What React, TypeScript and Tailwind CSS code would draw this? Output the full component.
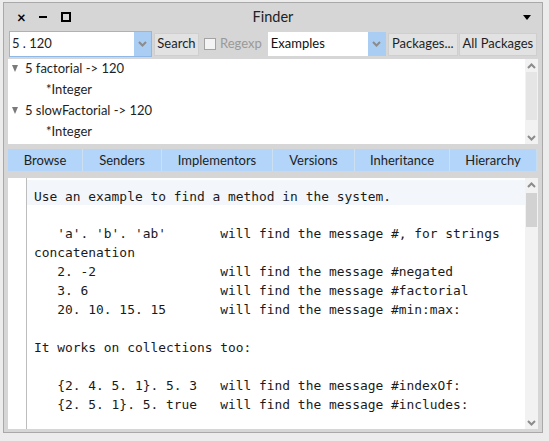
import React from "react";

const UI = "font-['Lato','Noto_Sans',sans-serif]";
const MONO = "font-['DejaVu_Sans_Mono','Liberation_Mono',monospace]";

const TREE = [
  { label: "5 factorial -> 120", child: "*Integer" },
  { label: "5 slowFactorial -> 120", child: "*Integer" },
];

const ACTIONS = [
  { label: "Browse", w: "w-[74px]" },
  { label: "Senders", w: "w-[79px]" },
  { label: "Implementors", w: "w-[111px]" },
  { label: "Versions", w: "w-[82px]" },
  { label: "Inheritance", w: "w-[95px]" },
  { label: "Hierarchy", w: "w-[87px]" },
];

const LINES = [
  "",
  "   'a'. 'b'. 'ab'       will find the message #, for strings",
  "concatenation",
  "   2. -2                will find the message #negated",
  "   3. 6                 will find the message #factorial",
  "   20. 10. 15. 15       will find the message #min:max:",
  "",
  "It works on collections too:",
  "",
  "   {2. 4. 5. 1}. 5. 3   will find the message #indexOf:",
  "   {2. 5. 1}. 5. true   will find the message #includes:",
];

function Chevron({ up = false, color = "#8c8c8c" }: { up?: boolean; color?: string }) {
  return (
    <svg width="9" height="6" viewBox="0 0 9 6">
      <polyline
        points={up ? "1,5 4.5,1.5 8,5" : "1,1 4.5,4.5 8,1"}
        fill="none"
        stroke={color}
        strokeWidth="2"
      />
    </svg>
  );
}

function ScrollBar({ thumbTop, thumbH, thumb }: { thumbTop: string; thumbH: string; thumb: string }) {
  return (
    <div className="w-[13px] shrink-0 bg-[#f2f2f2] flex flex-col">
      <div className="h-[13px] flex items-center justify-center">
        <Chevron up />
      </div>
      <div className={`${thumbTop} ${thumbH} ${thumb} mx-[1px]`} />
      <div className="flex-1" />
      <div className="h-[13px] flex items-center justify-center">
        <Chevron />
      </div>
    </div>
  );
}

export default function App() {
  return (
    <div className={`w-[549px] h-[441px] bg-[#ececec] pt-[2px] pl-[3px] ${UI} text-[#1e1e1e]`}>
      <div className="w-[540px] h-[431px] border border-[#a9a9a9] bg-[#d6d6d6] flex flex-col px-[4px]">
        {/* title bar */}
        <div className="h-[28px] flex items-center relative">
          <div className="flex items-center gap-[10px] pl-[9px]">
            <span className="text-[15px] font-bold leading-none text-black">×</span>
            <span className="w-[8px] h-[2px] bg-black ml-[3px]" />
            <span className="w-[10px] h-[10px] border-2 border-black ml-[4px]" />
          </div>
          <div className="absolute inset-0 flex items-center justify-center text-[14.5px] text-[#222]">Finder</div>
          <div className="ml-auto mr-[7px] mt-[1px] w-0 h-0 border-l-[4px] border-r-[4px] border-t-[5px] border-l-transparent border-r-transparent border-t-black" />
        </div>

        {/* controls */}
        <div className="h-[26px] flex items-center text-[13px]">
          <div className="ml-[1px] h-[26px] flex border border-[#8fb8e6] bg-white">
            <div className="w-[124px] flex items-center pl-[2px] text-[13px] text-[#222] whitespace-pre">5 . 120</div>
            <div className="w-[17px] bg-[#a9cdf3] flex items-center justify-center">
              <Chevron />
            </div>
          </div>
          <div className="ml-[2px] h-[23px] w-[45px] bg-[#e2e2e2] border border-[#cfcfcf] flex items-center justify-center">Search</div>
          <div className="ml-[5px] w-[12px] h-[12px] border border-[#a3a3a3] bg-[#f4f4f4]" />
          <span className="ml-[4px] text-[#9a9a9a]">Regexp</span>
          <div className="ml-[6px] h-[24px] flex bg-white">
            <div className="w-[100px] flex items-center pl-[3px] text-[#111]">Examples</div>
            <div className="w-[18px] bg-[#a9cdf3] flex items-center justify-center">
              <Chevron />
            </div>
          </div>
          <div className="ml-[2px] h-[23px] w-[70px] bg-[#e2e2e2] border border-[#cfcfcf] flex items-center justify-center">Packages...</div>
          <div className="ml-[1px] h-[23px] w-[78px] bg-[#e2e2e2] border border-[#cfcfcf] flex items-center justify-center">All Packages</div>
        </div>

        {/* results */}
        <div className="mt-[2px] h-[85px] bg-white flex text-[13px]">
          <div className="flex-1 -mt-[1px]">
            {TREE.map((t) => (
              <div key={t.label}>
                <div className="h-[21px] flex items-center">
                  <span className="ml-[4px] w-0 h-0 border-l-[3.5px] border-r-[3.5px] border-t-[7px] border-l-transparent border-r-transparent border-t-[#7a7a7a]" />
                  <span className="ml-[7px]">{t.label}</span>
                </div>
                <div className="h-[21px] flex items-center pl-[38px]">{t.child}</div>
              </div>
            ))}
          </div>
          <ScrollBar thumbTop="mt-0" thumbH="h-[48px]" thumb="bg-[#e5e5e5]" />
        </div>

        {/* action buttons */}
        <div className="mt-[5px] h-[22px] flex text-[13px] bg-[#c6dcf0]">
          {ACTIONS.map((a, i) => (
            <div
              key={a.label}
              className={`${a.w} ${i > 0 ? "border-l border-[#cde0f2]" : ""} bg-[#b2d5f9] flex items-center justify-center pt-[1px]`}
            >
              {a.label}
            </div>
          ))}
        </div>

        {/* source pane */}
        <div className="mt-[7px] h-[251px] bg-white flex">
          <div className="w-[18px] shrink-0" />
          <div className="w-[1px] bg-[#bdbdbd] shrink-0" />
          <div className={`flex-1 pt-[2px] ${MONO} text-[12.9px] text-[#1a1a1a]`}>
            <div className="h-[25px] pt-[7px] pl-[7px] bg-[#f3f7fb] leading-[19px] whitespace-pre">
              Use an example to find a method in the system.
            </div>
            {LINES.map((l, i) => (
              <div key={i} className="pl-[7px] h-[19px] leading-[19px] whitespace-pre">
                {l}
              </div>
            ))}
          </div>
          <ScrollBar thumbTop="mt-[2px]" thumbH="h-[34px]" thumb="bg-[#d2d2d2]" />
        </div>
      </div>
    </div>
  );
}
